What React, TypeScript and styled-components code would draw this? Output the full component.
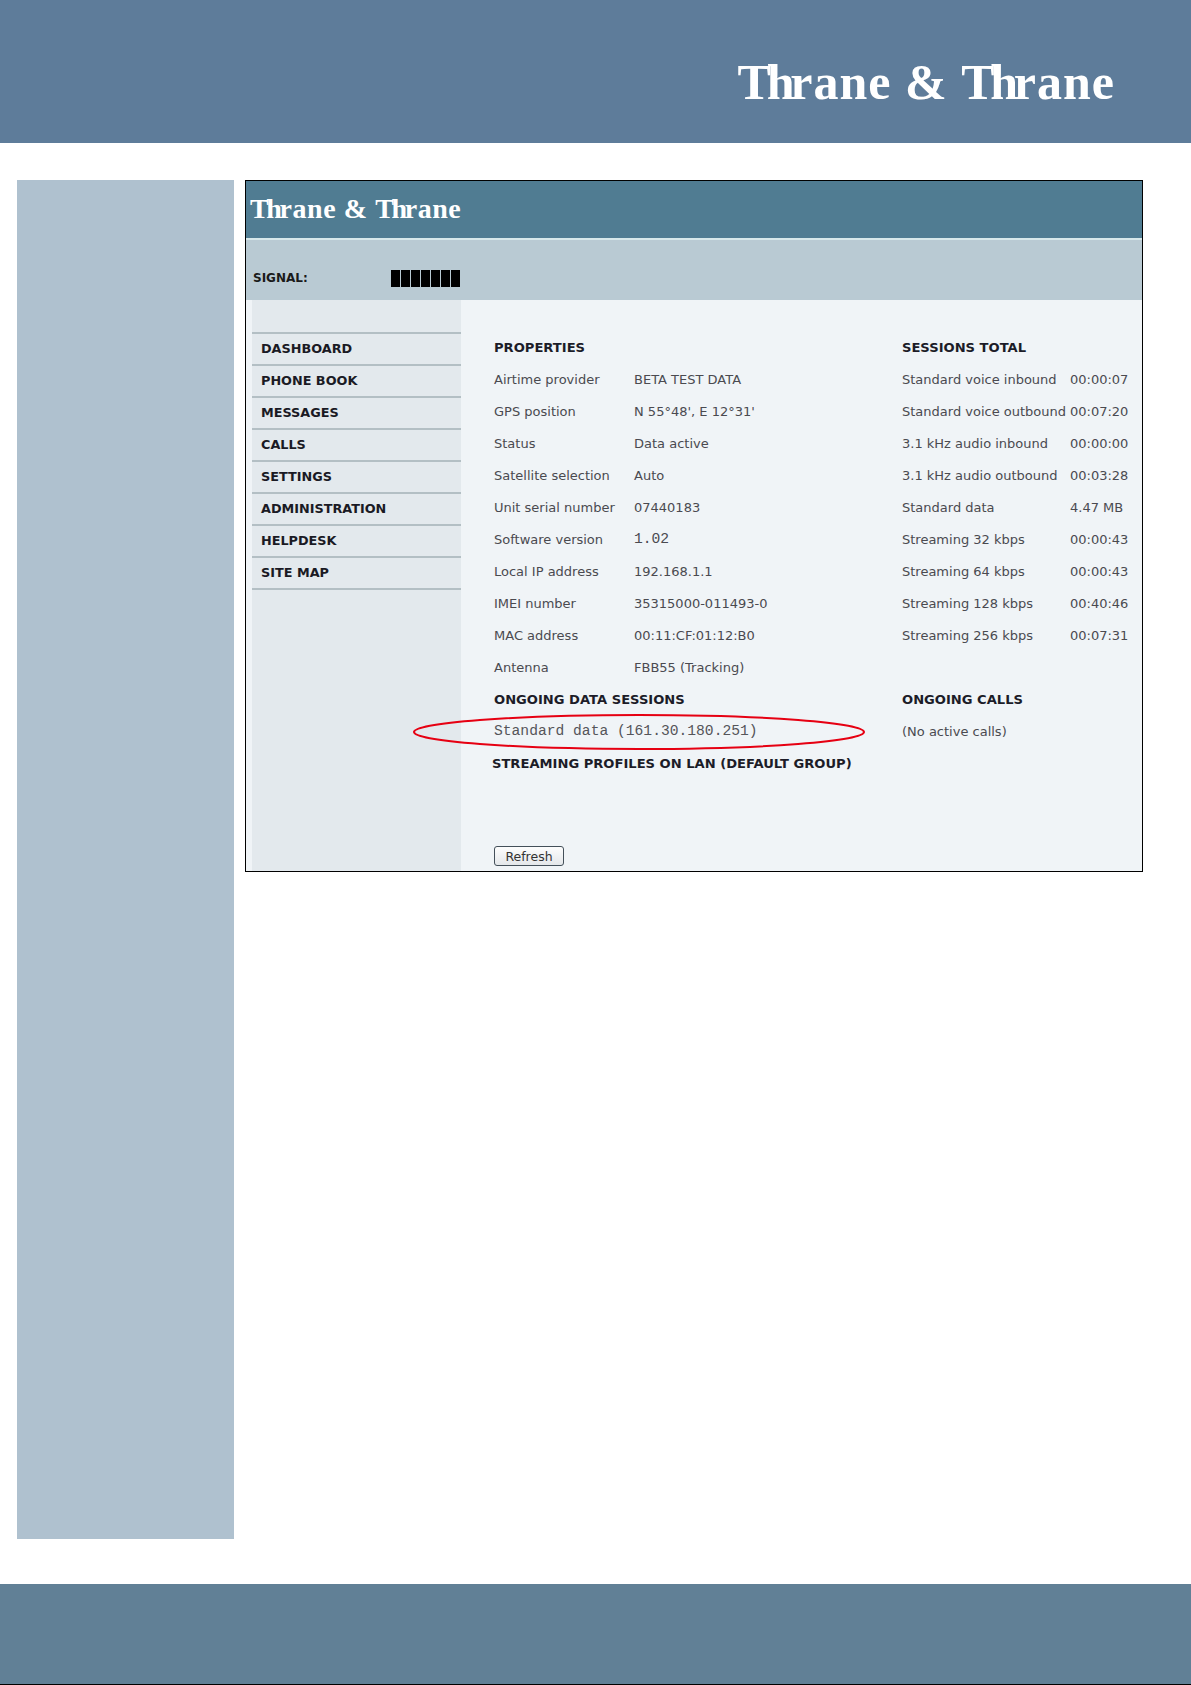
import { createGlobalStyle, styled } from "styled-components"

const GlobalStyle = createGlobalStyle`
  html, body {
    margin: 0;
    padding: 0;
    background: #fff;
  }
`

const Page = styled.div`
  width: 1191px;
  height: 1685px;
  display: flex;
  flex-direction: column;
  overflow: hidden;
`

const TopBanner = styled.header`
  height: 143px;
  flex: none;
  background: #5e7c9a;
  display: flex;
  justify-content: flex-end;
  align-items: flex-start;
  padding: 54px 76px 0 0;
  box-sizing: border-box;
`

const Logo = styled.div<{ $size: number }>`
  font-family: "Liberation Serif", serif;
  font-weight: 700;
  font-size: ${(p) => p.$size}px;
  line-height: 1.15;
  letter-spacing: 0.02em;
  color: #fff;
  white-space: nowrap;
`

const Th = styled.span`
  letter-spacing: -0.085em;
`

const Middle = styled.div`
  flex: none;
  height: 1359px;
  margin-top: 37px;
  padding: 0 48px 0 17px;
  display: flex;
  gap: 11px;
`

const SideStrip = styled.aside`
  width: 217px;
  flex: none;
  background: #afc1cf;
`

const Shot = styled.section`
  position: relative;
  width: 898px;
  height: 692px;
  box-sizing: border-box;
  border: 1px solid #000;
  background: #f0f4f7;
  display: flex;
  flex-direction: column;
  font-family: "DejaVu Sans", sans-serif;
`

const ShotHeader = styled.div`
  height: 59px;
  flex: none;
  background: #507c92;
  border-bottom: 2px solid #d7e8ea;
  padding: 12px 0 0 4px;
  box-sizing: border-box;
`

const SignalBand = styled.div`
  height: 60px;
  flex: none;
  background: #b9cad3;
  display: flex;
  align-items: flex-end;
  padding: 0 0 13px 7px;
  box-sizing: border-box;
`

const SignalLabel = styled.div`
  width: 138px;
  margin-bottom: 2px;
  font-size: 12px;
  font-weight: 700;
  color: #1a1a1a;
  line-height: 14px;
`

const SignalBars = styled.div`
  display: flex;
  gap: 1px;
`

const SignalBar = styled.div`
  width: 9px;
  height: 17px;
  background: #000;
`

const ShotBody = styled.div`
  flex: 1;
  display: flex;
  padding-left: 6px;
  min-height: 0;
`

const Menu = styled.nav`
  width: 209px;
  flex: none;
  background: #e3e9ed;
  padding-top: 32px;
  box-sizing: border-box;
`

const MenuItem = styled.div`
  height: 32px;
  box-sizing: border-box;
  border-top: 2px solid #b3bfc4;
  padding-left: 9px;
  font-size: 12.8px;
  font-weight: 700;
  line-height: 30px;
  color: #1a1a24;
`

const MenuEnd = styled.div`
  border-top: 2px solid #b3bfc4;
`

const Content = styled.main`
  flex: 1;
  padding: 31px 0 0 33px;
  min-width: 0;
`

const Columns = styled.div`
  display: grid;
  grid-template-columns: 408px 1fr;
`

const Column = styled.div``

const Row = styled.div`
  height: 32px;
  display: flex;
  align-items: center;
  white-space: nowrap;
`

const Heading = styled(Row)`
  font-size: 13.1px;
  font-weight: 700;
  color: #1c1c28;
`

const WideHeading = styled(Heading)`
  margin-left: -2px;
`

const Key = styled.span<{ $width: number }>`
  width: ${(p) => p.$width}px;
  flex: none;
  font-size: 13px;
  color: #4a4a50;
`

const Value = styled.span<{ $mono?: boolean }>`
  font-family: ${(p) => (p.$mono ? '"Liberation Mono", monospace' : "inherit")};
  font-size: ${(p) => (p.$mono ? "14.65px" : "13px")};
  color: #4a4a50;
`

const MonoLine = styled(Row)`
  font-family: "Liberation Mono", monospace;
  font-size: 14.65px;
  color: #55555a;
`

const RefreshButton = styled.button`
  display: block;
  margin-top: 67px;
  width: 70px;
  height: 20px;
  padding: 0;
  background: linear-gradient(#fdfdfd, #e4e7ea);
  border: 1px solid #44505a;
  border-radius: 3px;
  font-family: "DejaVu Sans", sans-serif;
  font-size: 12.5px;
  color: #333;
`

const Marker = styled.svg`
  position: absolute;
  left: 166px;
  top: 532px;
  width: 454px;
  height: 38px;
`

const Footer = styled.footer`
  flex: none;
  margin-top: 45px;
  height: 101px;
  box-sizing: border-box;
  background: #618096;
  border-bottom: 1px solid #000;
`

const MENU = ["DASHBOARD", "PHONE BOOK", "MESSAGES", "CALLS", "SETTINGS", "ADMINISTRATION", "HELPDESK", "SITE MAP"]

const PROPERTIES: { label: string; value: string; mono?: boolean }[] = [
  { label: "Airtime provider", value: "BETA TEST DATA" },
  { label: "GPS position", value: "N 55°48', E 12°31'" },
  { label: "Status", value: "Data active" },
  { label: "Satellite selection", value: "Auto" },
  { label: "Unit serial number", value: "07440183" },
  { label: "Software version", value: "1.02", mono: true },
  { label: "Local IP address", value: "192.168.1.1" },
  { label: "IMEI number", value: "35315000-011493-0" },
  { label: "MAC address", value: "00:11:CF:01:12:B0" },
  { label: "Antenna", value: "FBB55 (Tracking)" },
]

const SESSIONS = [
  { label: "Standard voice inbound", value: "00:00:07" },
  { label: "Standard voice outbound", value: "00:07:20" },
  { label: "3.1 kHz audio inbound", value: "00:00:00" },
  { label: "3.1 kHz audio outbound", value: "00:03:28" },
  { label: "Standard data", value: "4.47 MB" },
  { label: "Streaming 32 kbps", value: "00:00:43" },
  { label: "Streaming 64 kbps", value: "00:00:43" },
  { label: "Streaming 128 kbps", value: "00:40:46" },
  { label: "Streaming 256 kbps", value: "00:07:31" },
]

function LogoText({ size }: { size: number }) {
  return (
    <Logo $size={size}>
      <Th>Th</Th>rane &amp; <Th>Th</Th>rane
    </Logo>
  )
}

export default function App() {
  return (
    <Page>
      <GlobalStyle />
      <TopBanner>
        <LogoText size={50} />
      </TopBanner>
      <Middle>
        <SideStrip />
        <Shot>
          <ShotHeader>
            <LogoText size={28} />
          </ShotHeader>
          <SignalBand>
            <SignalLabel>SIGNAL:</SignalLabel>
            <SignalBars>
              {Array.from({ length: 7 }, (_, i) => (
                <SignalBar key={i} />
              ))}
            </SignalBars>
          </SignalBand>
          <ShotBody>
            <Menu>
              {MENU.map((item) => (
                <MenuItem key={item}>{item}</MenuItem>
              ))}
              <MenuEnd />
            </Menu>
            <Content>
              <Columns>
                <Column>
                  <Heading>PROPERTIES</Heading>
                  {PROPERTIES.map((row) => (
                    <Row key={row.label}>
                      <Key $width={140}>{row.label}</Key>
                      <Value $mono={row.mono}>{row.value}</Value>
                    </Row>
                  ))}
                  <Heading>ONGOING DATA SESSIONS</Heading>
                  <MonoLine>Standard data (161.30.180.251)</MonoLine>
                </Column>
                <Column>
                  <Heading>SESSIONS TOTAL</Heading>
                  {SESSIONS.map((row) => (
                    <Row key={row.label}>
                      <Key $width={168}>{row.label}</Key>
                      <Value>{row.value}</Value>
                    </Row>
                  ))}
                  <Row />
                  <Heading>ONGOING CALLS</Heading>
                  <Row>
                    <Value>(No active calls)</Value>
                  </Row>
                </Column>
              </Columns>
              <WideHeading>STREAMING PROFILES ON LAN (DEFAULT GROUP)</WideHeading>
              <RefreshButton type="button">Refresh</RefreshButton>
            </Content>
          </ShotBody>
          <Marker viewBox="0 0 454 38">
            <ellipse cx="227" cy="19" rx="225" ry="17" fill="none" stroke="#e60012" strokeWidth="2" />
          </Marker>
        </Shot>
      </Middle>
      <Footer />
    </Page>
  )
}
